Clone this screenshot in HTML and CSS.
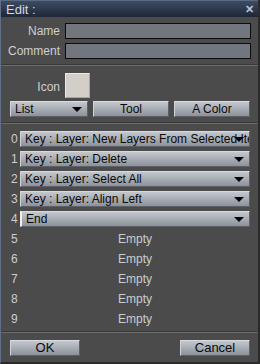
FILE: index.html
```html
<!DOCTYPE html>
<html lang="en">
<head>
  <meta charset="UTF-8" />
  <title>Edit</title>
  <link rel="stylesheet" href="styles.css">
</head>
<body>
  <div class="window">
    <div class="titlebar">
      <span class="title">Edit :</span>
      <span class="close">&#x2715;</span>
    </div>

    <div class="fields">
      <div class="field-row">
        <label>Name</label>
        <div class="text-input"></div>
      </div>
      <div class="field-row">
        <label>Comment</label>
        <div class="text-input"></div>
      </div>
    </div>

    <div class="separator"></div>

    <div class="icon-row">
      <label>Icon</label>
      <div class="icon-box"></div>
    </div>

    <div class="button-row">
      <div class="btn dropdown list-btn">List<span class="arrow"></span></div>
      <div class="btn">Tool</div>
      <div class="btn">A Color</div>
    </div>

    <div class="separator"></div>

    <div class="slots">
      <div class="slot">
        <span class="num">0</span>
        <div class="btn dropdown slot-select">Key : Layer: New Layers From Selected Items<span class="arrow"></span></div>
      </div>
      <div class="slot">
        <span class="num">1</span>
        <div class="btn dropdown slot-select">Key : Layer: Delete<span class="arrow"></span></div>
      </div>
      <div class="slot">
        <span class="num">2</span>
        <div class="btn dropdown slot-select">Key : Layer: Select All<span class="arrow"></span></div>
      </div>
      <div class="slot">
        <span class="num">3</span>
        <div class="btn dropdown slot-select">Key : Layer: Align Left<span class="arrow"></span></div>
      </div>
      <div class="slot">
        <span class="num">4</span>
        <div class="btn dropdown slot-select active">End<span class="arrow"></span></div>
      </div>
      <div class="slot">
        <span class="num">5</span>
        <div class="empty">Empty</div>
      </div>
      <div class="slot">
        <span class="num">6</span>
        <div class="empty">Empty</div>
      </div>
      <div class="slot">
        <span class="num">7</span>
        <div class="empty">Empty</div>
      </div>
      <div class="slot">
        <span class="num">8</span>
        <div class="empty">Empty</div>
      </div>
      <div class="slot">
        <span class="num">9</span>
        <div class="empty">Empty</div>
      </div>
    </div>

    <div class="separator bottom-sep"></div>

    <div class="footer">
      <div class="btn footer-btn">OK</div>
      <div class="btn footer-btn">Cancel</div>
    </div>
  </div>
</body>
</html>
```

FILE: styles.css
```css
* {
  box-sizing: border-box;
}

body {
  margin: 0;
  padding: 0;
  background: #2a2a2a;
  font-family: 'Liberation Sans', Arial, sans-serif;
  font-size: 12px;
}

.window {
  width: 260px;
  height: 364px;
  background: #4b4b4b;
  border-left: 1px solid #5f6f86;
  border-right: 2px solid #2b2b2b;
  border-bottom: 2px solid #2b2b2b;
  display: flex;
  flex-direction: column;
}

.titlebar {
  height: 17px;
  display: flex;
  align-items: center;
  justify-content: space-between;
  padding: 0 4px 0 5px;
  background: linear-gradient(to bottom, #3d4c63, #1d2739);
  border-top: 1px solid #5a6a82;
  color: #d3dae4;
  font-size: 13px;
}

.close {
  font-size: 11px;
  font-weight: bold;
  color: #b9c4d4;
}

.fields {
  display: flex;
  flex-direction: column;
  gap: 4px;
  padding-top: 6px;
}

.field-row,
.icon-row {
  display: flex;
  align-items: center;
}

.field-row label,
.icon-row label {
  width: 59px;
  margin-right: 5px;
  text-align: right;
  color: #cfcfcf;
  font-size: 12px;
}

.text-input {
  width: 186px;
  height: 16px;
  background: #72767f;
  border: 1px solid #0c0c0c;
}

.separator {
  margin-top: 5px;
  height: 2px;
  border-top: 1px solid #393939;
  border-bottom: 1px solid #6b6b6b;
}

.icon-row {
  margin-top: 7px;
}

.icon-row label {
  padding-top: 2px;
}

.icon-box {
  width: 25px;
  height: 25px;
  background: #d3cfc8;
  border-top: 1px solid #ece9e4;
  border-left: 1px solid #ece9e4;
  border-right: 1px solid #a9a59f;
  border-bottom: 1px solid #a9a59f;
}

.button-row {
  display: flex;
  gap: 5px;
  padding-left: 9px;
  margin-top: 3px;
}

.btn {
  position: relative;
  height: 16px;
  line-height: 14px;
  background: linear-gradient(to bottom, #c3c7ce, #8d9199);
  border-top: 1px solid #d8dbe0;
  border-left: 1px solid #d0d3d8;
  border-right: 1px solid #5d6068;
  border-bottom: 1px solid #5d6068;
  color: #0a0a0a;
  text-align: center;
  font-size: 12px;
  white-space: nowrap;
  overflow: hidden;
}

.button-row .btn {
  width: 76px;
}

.button-row .list-btn {
  width: 78px;
}

.dropdown {
  text-align: left;
  padding-left: 4px;
}

.arrow {
  position: absolute;
  right: 5px;
  top: 5px;
  width: 0;
  height: 0;
  border-left: 5px solid transparent;
  border-right: 5px solid transparent;
  border-top: 5px solid #050505;
}

.separator + .slots {
  padding-top: 7px;
}

.slots {
  display: flex;
  flex-direction: column;
  gap: 4px;
}

.slot {
  display: flex;
  align-items: center;
  height: 16px;
}

.num {
  width: 19px;
  padding-left: 10px;
  color: #cdcdcd;
  font-size: 12px;
}

.slot-select {
  width: 230px;
}

.slot-select.active {
  border-left: 2px solid #eef0f3;
}

.empty {
  width: 230px;
  text-align: center;
  color: #cdcdcd;
  font-size: 12px;
}

.bottom-sep {
  margin-top: 4px;
}

.footer {
  display: flex;
  justify-content: space-between;
  padding: 0 8px 0 9px;
  margin-top: 7px;
}

.footer-btn {
  width: 70px;
  font-size: 13px;
}
```
